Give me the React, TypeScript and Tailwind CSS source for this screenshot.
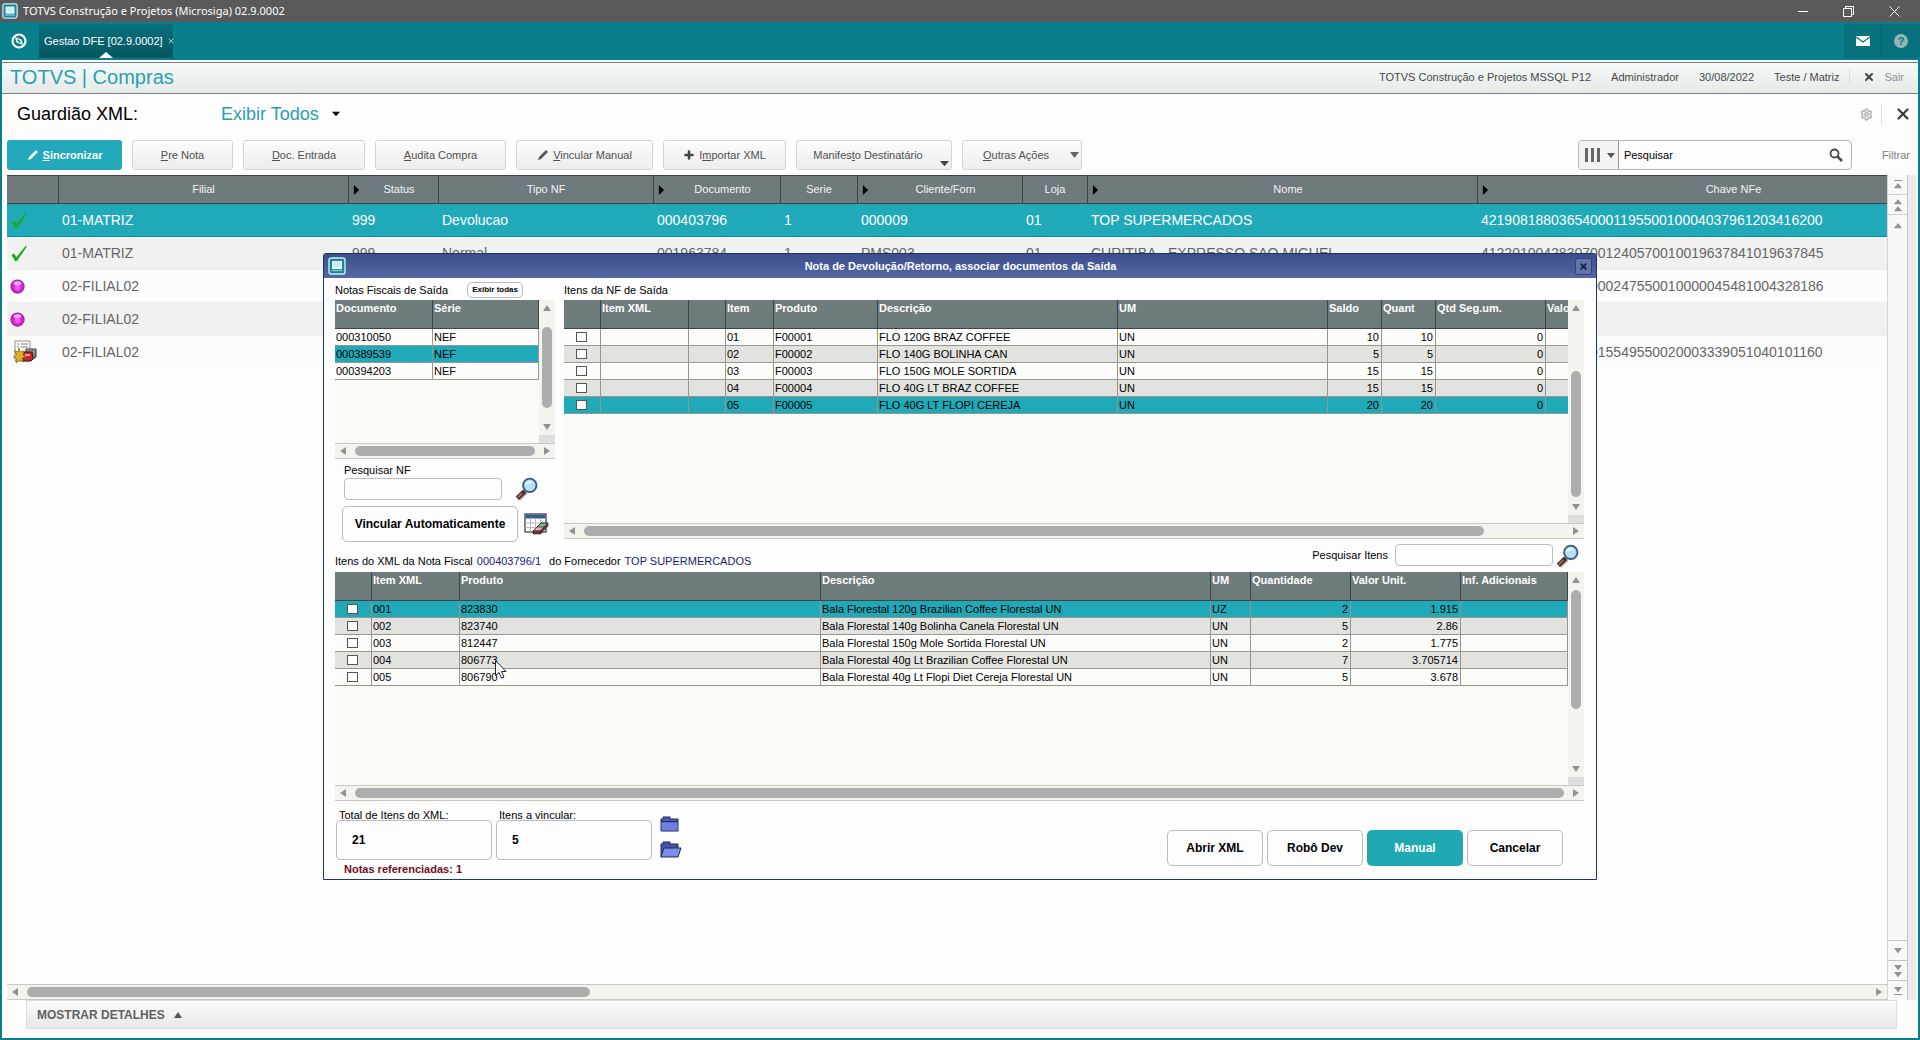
import React from "react";
import { Plus, Settings, X } from "lucide-react";

type Column = {
  label: string;
  width: string;
  align?: "right";
  arrow?: boolean;
};

type GridProps = {
  label: string;
  columns: Column[];
  rows: string[][];
  selected: number;
  checkable?: boolean;
  tableClass: string;
  bodyClass: string;
  vThumb: string;
  hThumb: string;
};

const mainColumns: Column[] = [
  { label: "", width: "w-[52px]" },
  { label: "Filial", width: "w-[290px]" },
  { label: "Status", width: "w-[90px]", arrow: true },
  { label: "Tipo NF", width: "w-[215px]" },
  { label: "Documento", width: "w-[127px]", arrow: true },
  { label: "Serie", width: "w-[77px]" },
  { label: "Cliente/Forn", width: "w-[165px]", arrow: true },
  { label: "Loja", width: "w-[65px]" },
  { label: "Nome", width: "w-[390px]", arrow: true },
  { label: "Chave NFe", width: "", arrow: true },
];

const mainRows = [
  ["ok", "01-MATRIZ", "999", "Devolucao", "000403796", "1", "000009", "01", "TOP SUPERMERCADOS", "42190818803654000119550010004037961203416200"],
  ["ok", "01-MATRIZ", "999", "Normal", "001963784", "1", "PMS003", "01", "CURITIBA - EXPRESSO SAO MIGUEL", "41220100428307001240570010019637841019637845"],
  ["ball", "02-FILIAL02", "", "", "", "", "", "", "", "35220800428307000247550010000045481004328186"],
  ["ball", "02-FILIAL02", "", "", "", "", "", "", "", ""],
  ["doc", "02-FILIAL02", "", "", "", "", "", "", "", "35220800428307015549550020003339051040101160"],
];

const notasColumns: Column[] = [
  { label: "Documento", width: "w-[98px]" },
  { label: "Série", width: "" },
];

const notasRows = [
  ["000310050", "NEF"],
  ["000389539", "NEF"],
  ["000394203", "NEF"],
];

const saidaColumns: Column[] = [
  { label: "", width: "w-[37px]" },
  { label: "Item XML", width: "w-[88px]" },
  { label: "", width: "w-[37px]" },
  { label: "Item", width: "w-[48px]" },
  { label: "Produto", width: "w-[104px]" },
  { label: "Descrição", width: "w-[240px]" },
  { label: "UM", width: "w-[210px]" },
  { label: "Saldo", width: "w-[54px]", align: "right" },
  { label: "Quant", width: "w-[54px]", align: "right" },
  { label: "Qtd Seg.um.", width: "w-[110px]", align: "right" },
  { label: "Valor", width: "w-[60px]", align: "right" },
];

const saidaRows = [
  ["", "", "", "01", "F00001", "FLO 120G BRAZ COFFEE", "UN", "10", "10", "0", ""],
  ["", "", "", "02", "F00002", "FLO 140G BOLINHA CAN", "UN", "5", "5", "0", ""],
  ["", "", "", "03", "F00003", "FLO 150G MOLE SORTIDA", "UN", "15", "15", "0", ""],
  ["", "", "", "04", "F00004", "FLO 40G LT BRAZ COFFEE", "UN", "15", "15", "0", ""],
  ["", "", "", "05", "F00005", "FLO 40G LT FLOPI CEREJA", "UN", "20", "20", "0", ""],
];

const xmlColumns: Column[] = [
  { label: "", width: "w-[37px]" },
  { label: "Item XML", width: "w-[88px]" },
  { label: "Produto", width: "" },
  { label: "Descrição", width: "w-[390px]" },
  { label: "UM", width: "w-[40px]" },
  { label: "Quantidade", width: "w-[100px]", align: "right" },
  { label: "Valor Unit.", width: "w-[110px]", align: "right" },
  { label: "Inf. Adicionais", width: "w-[107px]" },
];

const xmlRows = [
  ["", "001", "823830", "Bala Florestal 120g Brazilian Coffee Florestal UN", "UZ", "2", "1.915", ""],
  ["", "002", "823740", "Bala Florestal 140g Bolinha Canela Florestal UN", "UN", "5", "2.86", ""],
  ["", "003", "812447", "Bala Florestal 150g Mole Sortida Florestal UN", "UN", "2", "1.775", ""],
  ["", "004", "806773", "Bala Florestal 40g Lt Brazilian Coffee Florestal UN", "UN", "7", "3.705714", ""],
  ["", "005", "806790", "Bala Florestal 40g Lt Flopi Diet Cereja Florestal UN", "UN", "5", "3.678", ""],
];

const Triangle = ({ d, className }: { d: "up" | "down" | "left" | "right"; className?: string }) => {
  const points = {
    up: "4,1 8,7 0,7",
    down: "0,1 8,1 4,7",
    left: "7,0 7,8 1,4",
    right: "1,0 7,4 1,8",
  };
  return (
    <svg viewBox="0 0 8 8" preserveAspectRatio="none" className={className ?? "size-2 fill-[#929292]"}>
      <polygon points={points[d]} />
    </svg>
  );
};

const AppIcon = ({ className }: { className: string }) => (
  <svg viewBox="0 0 18 18" className={className}>
    <rect x="1" y="1" width="16" height="16" rx="2" fill="#15899c" stroke="#d3ecef" strokeWidth="1.4" />
    <rect x="4" y="4" width="10" height="8" fill="#e9f6fa" />
    <rect x="5" y="5" width="8" height="5" fill="#cfe9f8" />
    <path d="M3.500 13.500h11" stroke="#7cc6d0" strokeWidth="1.500" />
  </svg>
);

const Magnifier = () => (
  <svg viewBox="0 0 26 26" className="size-6">
    <path d="M3 23 11 15" stroke="#b8b8b8" strokeWidth="5" transform="translate(1 1)" />
    <path d="M2.500 23 10.500 15.500" stroke="#4a2c2a" strokeWidth="5" />
    <path d="M3 22.200 8 17.500" stroke="#a06a52" strokeWidth="2" />
    <circle cx="16" cy="9" r="7.300" fill="#b4e0f6" stroke="#3c5a80" strokeWidth="2" />
    <path d="M11.500 9a4.500 4.500 0 0 1 4.500-4.500c2 0 3 1 3 2-3 0-5 1-7.500 2.500z" fill="#f2fbff" />
  </svg>
);

const CalendarEraser = () => (
  <svg viewBox="0 0 25 22" className="h-[22px] w-[25px]">
    <rect x="1" y="1" width="21" height="18" fill="#fff" stroke="#333" strokeWidth="1.200" />
    <rect x="1.500" y="1.500" width="20" height="4" fill="#3d5c8a" />
    <path d="M1 10h21M1 14.500h21M6.500 6v13M11.500 6v13M16.500 6v13" stroke="#b9b9b9" strokeWidth="1" />
    <path d="m9 18 8-8h7l-7 8z" fill="#77b896" stroke="#222" />
    <path d="m9 18 4-4h7l-3.500 4z" fill="#e9a9ae" stroke="#222" strokeWidth=".600" />
    <path d="M9 18h7.500v3H9zM16.500 18l7.500-8v3l-7.500 8z" fill="#7b3148" stroke="#222" strokeWidth=".600" />
  </svg>
);

const StatusIcon = ({ kind }: { kind: string }) => {
  if (kind === "ok") {
    return (
      <svg viewBox="0 0 17 17" className="ml-1 size-[17px]">
        <path d="M0.500 10 3 8.500 5.500 12 14.500 1 16 1.500 6 16H4z" fill="#1fae1f" />
      </svg>
    );
  }
  if (kind === "ball") {
    return (
      <svg viewBox="0 0 16 16" className="ml-[3px] size-[15px]">
        <circle cx="8" cy="8" r="7" fill="#df1fdf" stroke="#8b2a8b" strokeWidth="1.200" />
        <circle cx="8" cy="9" r="3" fill="#f45df4" />
        <ellipse cx="8" cy="4.500" rx="4" ry="2.200" fill="#f8a8f8" />
      </svg>
    );
  }
  return (
    <svg viewBox="0 0 24 24" className="ml-[6px] size-6">
      <path d="M2 1h15v20H2z" fill="#fff" stroke="#8d8d8d" />
      <path d="M4 4h2M8 4h7M4 7h2M8 7h7" stroke="#777" />
      <path d="M13 9h10v8l-3 2h-7z" fill="#777" stroke="#333" />
      <path d="M15 9v4M18 9v4M21 9v6" stroke="#aaa" />
      <path d="M10 12h9l1 7-2 2h-8z" fill="#c62828" stroke="#4a1111" />
      <path d="M12 15h5" stroke="#f3c6c6" strokeWidth="1.500" />
      <path d="m6 8 1.500 4L11 11l-1 4 2.500 2-3 1 .500 4-3.500-2L3 23l.500-4L0.500 17 3.500 15 1.500 10.500 5 12z" fill="#e0b02a" stroke="#7d5f10" strokeWidth=".700" />
    </svg>
  );
};

const VScroll = ({ thumb }: { thumb: string }) => (
  <div className="flex w-4 shrink-0 flex-col items-center bg-[#f4f4ef]">
    <div className="flex h-4 shrink-0 items-center"><Triangle d="up" /></div>
    <div className="w-full flex-1">
      <div className={`mx-auto w-[10px] rounded-full bg-[#adadad] ${thumb}`} />
    </div>
    <div className="flex h-4 shrink-0 items-center"><Triangle d="down" /></div>
    <div className="h-2 w-full shrink-0 bg-[#dedede]" />
  </div>
);

const HScroll = ({ thumb }: { thumb: string }) => (
  <div className="flex h-4 shrink-0 items-center border-y border-[#c9c9c0] bg-[#f4f4ef] px-1">
    <Triangle d="left" />
    <div className="flex-1 px-2">
      <div className={`h-[10px] rounded-full bg-[#adadad] ${thumb}`} />
    </div>
    <Triangle d="right" />
  </div>
);

const Grid = ({ label, columns, rows, selected, checkable, tableClass, bodyClass, vThumb, hThumb }: GridProps) => (
  <div>
    <div className={`flex ${bodyClass}`}>
      <div className="min-w-0 flex-1 overflow-hidden bg-[#f9f9f6]">
        <table aria-label={label} className={`table-fixed border-separate border-spacing-0 ${tableClass}`}>
          <colgroup>
            {columns.map((c, i) => <col key={i} className={c.width} />)}
          </colgroup>
          <thead>
            <tr>
              {columns.map((c, i) => (
                <th key={i} className="h-[29px] overflow-hidden border-r border-b border-[#3c4646] bg-[#6f7c7c] p-0 pl-px text-left align-top leading-4 font-bold whitespace-nowrap text-white">
                  {c.label}
                </th>
              ))}
            </tr>
          </thead>
          <tbody>
            {rows.map((row, r) => (
              <tr key={r} className={r === selected ? "bg-[#20a9b8]" : r % 2 ? "bg-[#e2e2de]" : "bg-[#fcfcfa]"}>
                {row.map((cell, i) => (
                  <td
                    key={i}
                    className={`h-[17px] border-r border-b border-[#96968f] p-0 pr-[2px] pl-px leading-4 whitespace-nowrap ${columns[i].align === "right" ? "text-right" : ""}`}
                  >
                    {checkable && i === 0 ? (
                      <input
                        type="checkbox"
                        aria-label={`Selecionar item ${r + 1}`}
                        className="mx-auto block h-[10px] w-[11px] appearance-none border border-[#555] bg-white"
                      />
                    ) : (
                      cell
                    )}
                  </td>
                ))}
              </tr>
            ))}
          </tbody>
        </table>
      </div>
      <VScroll thumb={vThumb} />
    </div>
    <HScroll thumb={hThumb} />
  </div>
);

const toolButton = "flex h-[30px] items-center justify-center gap-1 rounded-[3px] border border-[#d4d4da] bg-linear-to-b from-[#fcfcfc] to-[#ededed] text-[#505050]";

const Toolbar = () => (
  <div className="flex items-center pr-2 pl-[5px]">
    <div className="flex gap-[10px]">
      <button className="flex h-[30px] w-[115px] items-center justify-center gap-1 rounded-[3px] bg-[#22a9bb] font-bold text-white">
        <svg viewBox="0 0 12 12" className="size-3"><path d="m1 11 1-3 7-7 2 2-7 7z" fill="#fff" /></svg>
        <span><u>S</u>incronizar</span>
      </button>
      <button className={`${toolButton} w-[101px]`}><span><u>P</u>re Nota</span></button>
      <button className={`${toolButton} w-[122px]`}><span><u>D</u>oc. Entrada</span></button>
      <button className={`${toolButton} w-[131px]`}><span><u>A</u>udita Compra</span></button>
      <button className={`${toolButton} w-[137px]`}>
        <svg viewBox="0 0 12 12" className="size-3"><path d="m1 11 1-3 7-7 2 2-7 7z" fill="#555" /></svg>
        <span><u>V</u>incular Manual</span>
      </button>
      <button className={`${toolButton} w-[123px]`}>
        <Plus className="size-3 text-[#444]" strokeWidth={5} />
        <span>I<u>m</u>portar XML</span>
      </button>
      <button className={`${toolButton} relative w-[156px] pr-3`}>
        <span>Manifes<u>t</u>o Destinatário</span>
        <Triangle d="down" className="absolute right-[2px] bottom-[2px] h-[7px] w-[9px] fill-[#444]" />
      </button>
      <button className={`${toolButton} relative w-[120px] pr-3`}>
        <span><u>O</u>utras Ações</span>
        <Triangle d="down" className="absolute top-[10px] right-[2px] h-2 w-[9px] fill-[#666]" />
      </button>
    </div>
    <div className="ml-auto flex h-[30px] w-[274px] items-center rounded-[4px] border border-[#b5b5bd] bg-[#fdfdfd]">
      <button aria-label="Colunas" className="flex h-full w-10 items-center justify-between rounded-l-[4px] border-r border-[#9a9a9a] bg-[#f3f3f3] px-[6px] pr-[3px]">
        <svg viewBox="0 0 16 14" className="h-[14px] w-4 fill-[#666]">
          <path d="M0 0h3v14H0zM6 0h3v14H6zM12 0h3v14h-3z" />
        </svg>
        <Triangle d="down" className="h-[7px] w-2 fill-[#555]" />
      </button>
      <input aria-label="Pesquisar" defaultValue="Pesquisar" className="min-w-0 flex-1 pl-[5px] text-black outline-none" />
      <svg viewBox="0 0 14 14" className="mr-2 size-[14px] fill-none stroke-[#4a4a4a]">
        <circle cx="5.500" cy="5.500" r="4" strokeWidth="1.800" />
        <path d="m8.500 8.500 4.500 4.500" strokeWidth="2.600" />
      </svg>
    </div>
    <a href="#" className="ml-[30px] text-[#808080]">Filtrar</a>
  </div>
);

const MainGrid = () => (
  <div className="flex flex-1 pl-[5px]">
    <div className="flex min-w-0 flex-1 flex-col">
      <div className="flex-1 overflow-hidden">
        <table aria-label="Guardião XML" className="w-[calc(100%+92px)] table-fixed border-separate border-spacing-0">
          <colgroup>
            {mainColumns.map((c, i) => <col key={i} className={c.width} />)}
          </colgroup>
          <thead>
            <tr>
              {mainColumns.map((c, i) => (
                <th key={i} className="h-[29px] border-t border-r border-b border-[#3d4444] bg-[#6f7a7c] p-0 font-normal text-[#f4f4f4]">
                  <div className="flex items-center">
                    {c.arrow && <Triangle d="right" className="ml-1 h-[10px] w-[7px] fill-black" />}
                    <span className="flex-1">{c.label}</span>
                  </div>
                </th>
              ))}
            </tr>
          </thead>
          <tbody className="text-[14px]">
            {mainRows.map((row, r) => (
              <tr key={r} className={r === 0 ? "bg-[#20a9b8] text-white" : r % 2 ? "bg-[#f1f1ef] text-[#666]" : "bg-[#fcfcfd] text-[#666]"}>
                {row.map((cell, i) => (
                  <td key={i} className={`h-[33px] border-b p-0 pl-[3px] whitespace-nowrap first:pl-0 ${r === 0 ? "border-[#168a98]" : r === 4 ? "border-transparent" : "border-[#ececec]"}`}>
                    {i === 0 ? <StatusIcon kind={cell} /> : cell}
                  </td>
                ))}
              </tr>
            ))}
          </tbody>
        </table>
      </div>
      <HScroll thumb="w-[563px]" />
    </div>
    <div className="flex w-5 flex-col border-l border-[#d4d4d4] bg-[#f8f8f8]">
      <button aria-label="Primeiro" className="flex h-5 flex-col items-center justify-center gap-px border-b border-[#d0d0d0]">
        <span className="h-px w-2 bg-[#929292]" /><Triangle d="up" className="h-[7px] w-2 fill-[#929292]" />
      </button>
      <button aria-label="Página acima" className="flex h-5 flex-col items-center justify-center border-b border-[#d0d0d0]">
        <Triangle d="up" className="h-[7px] w-2 fill-[#929292]" /><Triangle d="up" className="h-[7px] w-2 fill-[#929292]" />
      </button>
      <button aria-label="Acima" className="flex h-5 items-center justify-center"><Triangle d="up" className="h-[7px] w-2 fill-[#929292]" /></button>
      <div className="flex-1" />
      <button aria-label="Abaixo" className="flex h-5 items-center justify-center border-t border-[#c4c4c4]"><Triangle d="down" className="h-[7px] w-2 fill-[#929292]" /></button>
      <button aria-label="Página abaixo" className="flex h-5 flex-col items-center justify-center border-t border-[#c4c4c4]">
        <Triangle d="down" className="h-[7px] w-2 fill-[#929292]" /><Triangle d="down" className="h-[7px] w-2 fill-[#929292]" />
      </button>
      <button aria-label="Último" className="flex h-5 flex-col items-center justify-center gap-px border-t border-[#c4c4c4]">
        <Triangle d="down" className="h-[7px] w-2 fill-[#929292]" /><span className="h-px w-2 bg-[#929292]" />
      </button>
    </div>
    <div className="mr-[2px] w-[9px] border-l border-[#c4c4c4] bg-[#eaeae8]" />
  </div>
);

const dialogButton = "h-9 w-24 rounded-[5px] border border-[#b9b9c8] bg-[#fdfdfe] text-[12px] font-bold";
const dialogInput = "rounded-[4px] border border-[#bcbcc6] bg-[#fdfdfe] outline-none";

const Dialog = () => (
  <section role="dialog" aria-labelledby="dlg-title" className="absolute inset-x-0 top-[253px] mx-auto w-[1274px] max-w-full rounded-t-[3px] border border-[#173a5e] bg-[#fdfdfe] text-black">
    <header className="flex h-6 items-center justify-between bg-linear-to-b from-[#3c4d8c] to-[#5468a4] px-1">
      <AppIcon className="size-[18px]" />
      <h2 id="dlg-title" className="font-bold text-white">Nota de Devolução/Retorno, associar documentos da Saída</h2>
      <button aria-label="Fechar" className="flex size-[17px] items-center justify-center rounded-[2px] border border-[#33427c] bg-[#6474ab]">
        <X className="size-[9px] text-[#1c2444]" strokeWidth={5} />
      </button>
    </header>
    <div className="pr-[12px] pl-[11px]">
      <div className="flex gap-[9px]">
        <div className="w-[220px] shrink-0">
          <div className="flex h-[22px] items-center justify-between pt-[2px] pr-[32px]">
            <span>Notas Fiscais de Saída</span>
            <button className="h-4 rounded-[5px] border border-[#b9b9c8] px-1 text-[8px] leading-[10px] font-bold">Exibir todas</button>
          </div>
          <Grid
            label="Notas Fiscais de Saída"
            columns={notasColumns}
            rows={notasRows}
            selected={1}
            tableClass="w-full"
            bodyClass="h-[143px]"
            vThumb="mt-[11px] h-[81px]"
            hThumb="w-full"
          />
          <div className="pt-1 pl-[7px]">
            <label htmlFor="pesquisar-nf" className="block h-[15px] pl-[2px] leading-[15px]">Pesquisar NF</label>
            <div className="flex h-[22px] items-center gap-[13px] pl-[2px]">
              <input id="pesquisar-nf" className={`${dialogInput} h-[22px] w-[158px] px-1`} />
              <button aria-label="Buscar nota fiscal"><Magnifier /></button>
            </div>
            <div className="flex items-center gap-[6px] pt-[6px]">
              <button className="h-9 w-[176px] rounded-[5px] border border-[#b9b9c8] bg-[#fdfdfe] text-[12px] font-bold">Vincular Automaticamente</button>
              <button aria-label="Limpar vínculos"><CalendarEraser /></button>
            </div>
          </div>
        </div>
        <div className="min-w-0 flex-1">
          <div className="flex h-[22px] items-center pt-[2px]">Itens da NF de Saída</div>
          <Grid
            label="Itens da NF de Saída"
            columns={saidaColumns}
            rows={saidaRows}
            selected={4}
            checkable
            tableClass="w-[1042px]"
            bodyClass="h-[223px]"
            vThumb="mt-[55px] h-[126px]"
            hThumb="w-[900px]"
          />
        </div>
      </div>
      <div className="flex h-[30px] items-start pt-[2px]">
        <p className="flex pt-[9px]">
          <span>Itens do XML da Nota Fiscal</span>
          <span className="ml-1 text-[#1c1c6c]">000403796/1</span>
          <span className="ml-2">do Fornecedor</span>
          <span className="ml-1 text-[#1c1c6c]">TOP SUPERMERCADOS</span>
        </p>
        <label htmlFor="pesquisar-itens" className="ml-auto leading-[22px]">Pesquisar Itens</label>
        <input id="pesquisar-itens" className={`${dialogInput} ml-[7px] h-[22px] w-[158px] px-1`} />
        <button aria-label="Buscar item" className="mr-1 ml-[3px]"><Magnifier /></button>
      </div>
      <Grid
        label="Itens do XML da Nota Fiscal"
        columns={xmlColumns}
        rows={xmlRows}
        selected={0}
        checkable
        tableClass="w-full"
        bodyClass="h-[213px]"
        vThumb="mt-[2px] h-[119px]"
        hThumb="w-full"
      />
      <div className="flex pt-[9px] pl-px">
        <div>
          <div className="flex gap-1">
            <div>
              <label htmlFor="total-itens" className="block h-[10px] pl-[3px] leading-[10px]">Total de Itens do XML:</label>
              <input id="total-itens" readOnly value="21" className={`${dialogInput} block h-10 w-[156px] pl-[15px] text-[12px] font-bold`} />
            </div>
            <div>
              <label htmlFor="itens-vincular" className="block h-[10px] pl-[3px] leading-[10px]">Itens a vincular:</label>
              <input id="itens-vincular" readOnly value="5" className={`${dialogInput} block h-10 w-[156px] pl-[15px] text-[12px] font-bold`} />
            </div>
          </div>
          <p className="h-[19px] pl-2 leading-[19px] font-bold text-[#6e0d1c]">Notas referenciadas: 1</p>
        </div>
        <div className="ml-2 flex flex-col gap-[9px] pt-[6px]">
          <button aria-label="Abrir pasta">
            <svg viewBox="0 0 20 16" className="h-4 w-5">
              <path d="M1 15V3h2V1h7v2h8v12z" fill="#4c5cb8" stroke="#182a5c" />
              <path d="M1.500 6.500h16v8h-16z" fill="#6f80dc" />
              <path d="M1 5.500h17" stroke="#182a5c" />
            </svg>
          </button>
          <button aria-label="Abrir pasta do XML">
            <svg viewBox="0 0 22 17" className="h-[17px] w-[22px]">
              <path d="M1 16V3h2V1h7v2h8v4" fill="#4c50a8" stroke="#182a5c" />
              <path d="M1 16 4 7h17l-3 9z" fill="#7c8eea" stroke="#182a5c" />
            </svg>
          </button>
        </div>
        <div className="mr-[21px] ml-auto flex gap-1 pt-5">
          <button className={dialogButton}>Abrir XML</button>
          <button className={dialogButton}>Robô Dev</button>
          <button className="h-9 w-24 rounded-[5px] bg-[#20a9b3] text-[12px] font-bold text-white">Manual</button>
          <button className={dialogButton}>Cancelar</button>
        </div>
      </div>
    </div>
    <svg viewBox="0 0 12 19" className="absolute top-[406px] left-[171px] h-[19px] w-3">
      <path d="M.500.500v15l3.500-3 2.500 5.500 2.500-1-2.500-5.500h4.500z" fill="#fff" stroke="#222" />
    </svg>
  </section>
);

const App = () => {
  return (
    <div className="relative flex min-h-screen flex-col bg-[#fdfdfe] font-['Liberation_Sans',Arial,sans-serif] text-[11px]">
      <div className="flex h-[22px] items-center bg-[#5a5a5a] pl-[2px] text-white">
        <AppIcon className="size-4" />
        <h1 className="ml-[5px] font-['Noto_Sans',sans-serif] text-[11px]">TOTVS Construção e Projetos (Microsiga) 02.9.0002</h1>
        <div className="ml-auto flex items-center gap-[35px] pr-[20px]">
          <button aria-label="Minimizar" className="h-px w-[10px] bg-white" />
          <button aria-label="Restaurar">
            <svg viewBox="0 0 11 11" className="size-[11px] fill-none stroke-white">
              <path d="M.500 2.500h8v8h-8zM2.500 2.500v-2h8v8h-2" />
            </svg>
          </button>
          <button aria-label="Fechar janela">
            <svg viewBox="0 0 11 11" className="size-[11px] stroke-white"><path d="m.500.500 10 10M10.500.500l-10 10" /></svg>
          </button>
        </div>
      </div>

      <nav className="flex h-[38px] items-center bg-[#087f8b] text-white">
        <button aria-label="Início" className="ml-[11px]">
          <svg viewBox="0 0 16 16" className="size-4">
            <circle cx="8" cy="8" r="6.500" fill="none" stroke="#fff" strokeWidth="2.200" />
            <path d="m4 4 6.500 2.500L12 12l-6.500-2.500z" fill="#fff" />
            <path d="m6.500 6.500 3 3" stroke="#087f8b" strokeWidth="1.500" />
          </svg>
        </button>
        <div className="relative ml-[12px] flex h-[34px] w-[134px] items-center gap-1 bg-linear-to-b from-[#08707c] to-[#055660] pl-[5px]">
          <a href="#" className="shrink-0 whitespace-nowrap">Gestao DFE [02.9.0002]</a>
          <X className="size-2 shrink-0" strokeWidth={2} />
          <Triangle d="up" className="absolute bottom-[-1px] left-[60px] h-2 w-[14px] fill-white" />
        </div>
        <div className="ml-auto flex h-[34px] items-center bg-[#07727e]">
          <button aria-label="Mensagens" className="flex h-full w-[38px] items-center justify-center border-r border-[#055f69]">
            <svg viewBox="0 0 14 10" className="h-[10px] w-[14px]">
              <rect width="14" height="10" fill="#fff" />
              <path d="m0 1 7 5 7-5" fill="none" stroke="#07727e" strokeWidth="1.200" />
            </svg>
          </button>
          <button aria-label="Ajuda" className="flex w-[38px] justify-center">
            <span className="flex size-[14px] items-center justify-center rounded-full bg-[#94b5b8] font-bold text-[#07727e]">?</span>
          </button>
        </div>
      </nav>

      <div className="flex flex-1 flex-col border-x-2 border-b-2 border-[#087f8b] pt-[2px]">
        <div className="flex h-8 items-center border-y border-[#7a7f88] bg-linear-to-b from-[#f3faf9] to-[#e6eae7] pb-[2px] pl-2 text-[#484848]">
          <h2 className="flex-1 text-[20px] text-[#2aa0ae]">TOTVS | Compras</h2>
          <div className="flex gap-5 pr-[10px]">
            <span>TOTVS Construção e Projetos MSSQL P12</span>
            <span>Administrador</span>
            <span>30/08/2022</span>
            <span>Teste / Matriz</span>
          </div>
          <button className="flex items-center gap-[9px] border-l border-[#dcdfdd] pr-[14px] pl-[13px] text-[#8e8e8e]">
            <X className="size-3 text-[#444]" strokeWidth={4} />
            Sair
          </button>
        </div>

        <div className="flex h-[46px] items-center pb-[6px] pl-[15px] text-[18px]">
          <h3 className="w-[204px] text-black">Guardião XML:</h3>
          <button className="flex items-center gap-[13px] text-[#2aa0ae]">
            Exibir Todos
            <Triangle d="down" className="h-[6px] w-2 fill-black" />
          </button>
          <button aria-label="Configurar" className="ml-auto border-r border-[#dcdcdc] py-1 pr-2">
            <Settings className="size-[13px] text-[#b5b5b5]" strokeWidth={3} />
          </button>
          <button aria-label="Fechar rotina" className="mr-[6px] ml-[12px]">
            <X className="size-[18px] text-[#3c3c3c]" strokeWidth={3} />
          </button>
        </div>

        <Toolbar />
        <div className="h-[5px]" />
        <MainGrid />

        <div className="mr-[21px] mb-[9px] ml-6 flex h-[29px] items-center border border-[#dcdce2] bg-linear-to-b from-[#fafafa] to-[#e8e8e8] pl-[10px]">
          <button className="flex items-center gap-[9px] text-[12px] font-bold text-[#626262]">
            MOSTRAR DETALHES
            <Triangle d="up" className="size-2 fill-[#555]" />
          </button>
        </div>
      </div>

      <Dialog />
    </div>
  );
};

export default App;
